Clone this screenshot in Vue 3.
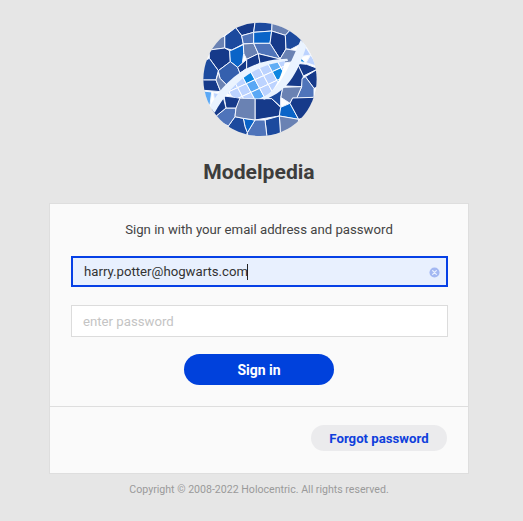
<template>
  <div class="login-page">
    <svg class="logo" viewBox="0 0 420 390" width="140" height="130" aria-label="Modelpedia logo">
      <defs>
        <clipPath id="logo-clip"><circle cx="210" cy="208" r="170" /></clipPath>
        <clipPath id="leaf-clip">
          <path d="M108 246C145 195 205 158 286 150C274 200 254 248 216 266L136 264Z" />
        </clipPath>
      </defs>
      <g clip-path="url(#logo-clip)">
        <rect x="30" y="30" width="360" height="360" fill="#fff" />
        <g stroke="#f2f6ff" stroke-width="3" stroke-linejoin="round">
          <polygon v-for="(cell, i) in cells" :key="i" :points="cell[0]" :fill="cell[1]" />
        </g>
        <path d="M108 246C145 195 205 158 286 150C274 200 254 248 216 266L136 264Z" fill="#fff" />
        <g clip-path="url(#leaf-clip)" stroke="#fff" stroke-width="3">
          <polygon v-for="cell in leafCells" :key="cell.key" :points="cell.points" :fill="cell.fill" />
        </g>
        <path d="M56 296L74 308C110 245 170 165 294 153L292 146C170 148 100 215 56 296Z" fill="#eaf3ff" />
        <path d="M332 90L352 100C330 170 300 245 222 269L216 263C275 235 300 160 332 90Z" fill="#eaf3ff" />
      </g>
    </svg>
    <h1 class="brand">Modelpedia</h1>

    <section class="card">
      <form class="card-body" @submit.prevent>
        <p class="intro">Sign in with your email address and password</p>
        <div class="field field-active">
          <input v-model="email" class="text-input" type="text" />
          <span v-if="email" class="caret"></span>
          <button v-if="email" type="button" class="clear" aria-label="Clear" @click="email = ''">
            <svg viewBox="0 0 12 12" width="11" height="11">
              <circle cx="6" cy="6" r="5.5" fill="#a3b8f2" />
              <path d="M4 4l4 4M8 4l-4 4" stroke="#e8f0fe" stroke-width="1.4" stroke-linecap="round" />
            </svg>
          </button>
        </div>
        <div class="field">
          <input v-model="password" class="text-input" type="password" placeholder="enter password" />
        </div>
        <button type="submit" class="sign-in">Sign in</button>
      </form>
      <footer class="card-footer">
        <button type="button" class="forgot">Forgot password</button>
      </footer>
    </section>

    <p class="copyright">Copyright © 2008-2022 Holocentric. All rights reserved.</p>
  </div>
</template>

<script setup>
import { ref } from 'vue'

const email = ref('harry.potter@hogwarts.com')
const password = ref('')

const dark = '#163a8a'
const mid = '#1c4a9e'
const sea = '#4f74ba'
const slate = '#6a82b3'
const blue = '#0a64c8'
const light = '#bcd3ff'
const sky = '#5aa8f5'
const bright = '#0d86e0'

// mosaic cells, in the 420x390 logo space
const cells = [
  ['137,53 140,30 196,30 191,67 155,77', dark],
  ['196,30 247,30 245,63 191,67', mid],
  ['247,30 310,50 286,76 245,63', slate],
  ['104,78 137,53 155,77 160,102 125,120 104,114', mid],
  ['104,78 104,114 58,120 50,100', slate],
  ['155,77 191,67 191,100 160,102', sea],
  ['191,67 245,63 240,100 191,100', blue],
  ['245,63 286,76 288,117 270,147 240,100', dark],
  ['286,76 310,50 340,98 302,118 288,117', mid],
  ['160,102 191,100 205,131 170,148 161,130', slate],
  ['191,100 240,100 270,147 205,131', sea],
  ['58,120 104,114 119,122 121,155 85,182 58,145', dark],
  ['119,122 126,120 160,104 161,130 157,160 143,172 121,155', blue],
  ['58,145 85,182 78,210 30,210 30,160', mid],
  ['85,182 121,155 143,172 150,190 110,225 90,205', '#3560ae'],
  ['157,160 170,148 170,175 150,190 143,172', dark],
  ['170,148 205,131 210,160 170,180', dark],
  ['205,131 270,147 275,160 210,160', dark],
  ['270,147 288,117 322,122 310,155 275,160', slate],
  ['340,100 362,135 330,140', light],
  ['318,152 330,140 346,158', bright],
  ['362,135 385,170 348,158', light],
  ['322,160 350,163 385,176 340,198', dark],
  ['312,160 322,160 340,198 335,230 288,228 283,214', dark],
  ['346,200 385,176 385,230 372,235', dark],
  ['336,206 346,200 372,235 372,262 320,265 335,230', sea],
  ['278,232 335,230 320,265 308,264 300,280 272,262', slate],
  ['218,266 278,232 272,262 272,290 245,266', mid],
  ['195,266 245,266 272,292 268,318 195,330', dark],
  ['272,292 300,280 326,328 268,318', blue],
  ['308,264 372,262 395,265 350,320 326,328 300,280', dark],
  ['268,318 326,328 320,370 272,380', slate],
  ['225,330 268,318 272,380 232,390', mid],
  ['195,330 225,330 232,390 175,385 172,368', sea],
  ['160,325 195,330 172,368 165,350', blue],
  ['115,348 135,320 160,325 165,350 172,368 165,385 120,370', mid],
  ['108,294 138,294 135,320 115,348 70,325', sea],
  ['146,264 195,266 195,330 160,325 135,320 138,294', slate],
  ['102,258 150,264 138,294 108,294', dark],
  ['100,262 108,294 70,325 60,300', dark],
  ['30,210 78,210 92,245 30,240', dark],
  ['85,188 90,205 110,225 95,255 92,245 78,210', slate],
  ['40,243 65,246 60,285 40,280', sky],
  ['70,248 92,252 75,280', light]
]

// the leaf is a skewed grid, clipped to its outline
const highlighted = { '0,0': bright, '0,1': sky, '0,2': sky, '3,0': '#62aef5', '3,1': bright, '3,2': bright }
const leafCells = []
for (let u = -3; u < 6; u++) {
  for (let v = -2; v < 5; v++) {
    const x = 155 + u * 26 + v * 14
    const y = 195 - u * 12 + v * 26
    leafCells.push({
      key: `${u},${v}`,
      points: `${x},${y} ${x + 26},${y - 12} ${x + 40},${y + 14} ${x + 14},${y + 26}`,
      fill: highlighted[`${u},${v}`] || light
    })
  }
}
</script>

<style scoped>
.login-page {
  box-sizing: border-box;
  inline-size: 518px;
  min-block-size: 521px;
  padding-block-start: 10px;
  display: flex;
  flex-direction: column;
  align-items: center;
  font-family: Roboto, "Liberation Sans", sans-serif;
}

.logo {
  display: block;
  flex-shrink: 0;
  margin-inline-start: 2px;
}

.brand {
  margin: 19px 0 0;
  font-size: 21.12px;
  line-height: 25px;
  font-weight: 700;
  color: #3d3d3d;
}

.card {
  box-sizing: border-box;
  inline-size: 420px;
  margin-block-start: 19px;
  background: #fafafa;
  border: 1px solid #dedede;
}

.card-body {
  padding: 17px 20px 21px 21px;
  display: flex;
  flex-direction: column;
  align-items: center;
  border-block-end: 1px solid #dedede;
}

.intro {
  margin: 0 1px 18px 0;
  font-size: 13.2px;
  line-height: 17px;
  color: #444;
}

.field {
  position: relative;
  inline-size: 100%;
  block-size: 32px;
  margin-block-end: 17px;
}

.field-active {
  block-size: 31px;
  margin-block-end: 18px;
}

.text-input {
  box-sizing: border-box;
  inline-size: 100%;
  block-size: 100%;
  padding: 0 28px 0 11px;
  border: 1px solid #dcdcdc;
  border-radius: 0;
  outline: none;
  background: #fff;
  font-family: inherit;
  font-size: 13.2px;
  color: #333;
}

.text-input::placeholder {
  color: #c4c4c4;
  opacity: 1;
}

.field-active .text-input {
  border: 2px solid #0640e6;
  background: #e8f0fe;
}

.caret {
  position: absolute;
  left: 176px;
  top: 8px;
  inline-size: 1px;
  block-size: 16px;
  background: #222;
}

.clear {
  position: absolute;
  right: 8px;
  top: 11px;
  padding: 0;
  border: none;
  background: none;
  display: flex;
  cursor: pointer;
}

.sign-in {
  inline-size: 150px;
  block-size: 31px;
  margin-inline-end: 1px;
  border: none;
  border-radius: 16px;
  background: #0041dc;
  color: #fff;
  font-family: inherit;
  font-size: 14px;
  font-weight: 700;
  cursor: pointer;
}

.card-footer {
  display: flex;
  justify-content: flex-end;
  padding: 18px 21px 22px;
}

.forgot {
  inline-size: 136px;
  block-size: 26px;
  padding: 0;
  border: none;
  border-radius: 13px;
  background: #ebebed;
  color: #0f3fdc;
  font-family: inherit;
  font-size: 13.2px;
  font-weight: 700;
  cursor: pointer;
}

.copyright {
  margin: 9px 0 0;
  font-size: 10.6px;
  line-height: 13px;
  color: #9a9a9a;
}
</style>

<style>
body {
  margin: 0;
  background: #e6e6e6;
}
</style>
